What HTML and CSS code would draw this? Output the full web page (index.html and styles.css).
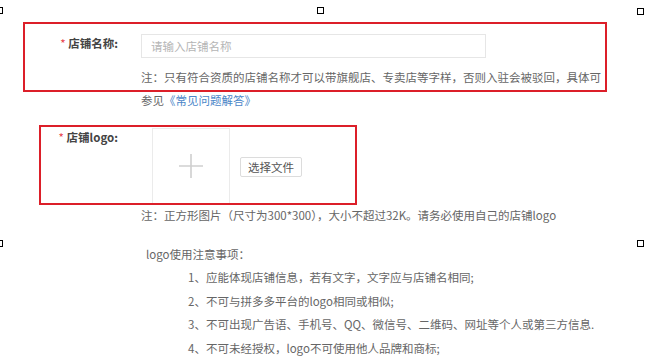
FILE: index.html
```html
<!DOCTYPE html>
<html lang="zh-CN">
<head>
    <meta charset="UTF-8">
    <meta name="viewport" content="width=device-width, initial-scale=1.0">
    <title>店铺信息</title>
    <link rel="stylesheet" href="styles.css">
</head>
<body>
    <div class="canvas">
        <form class="form">
            <div class="row row-name">
                <label class="label"><span class="req">*</span> 店铺名称:</label>
                <div class="field">
                    <input class="input" type="text" placeholder="请输入店铺名称">
                    <p class="tip tip-first">注：只有符合资质的店铺名称才可以带旗舰店、专卖店等字样，否则入驻会被驳回，具体可</p>
                    <p class="tip">参见<a class="link" href="#">《常见问题解答》</a></p>
                </div>
            </div>

            <div class="row row-logo">
                <label class="label"><span class="req">*</span> 店铺logo:</label>
                <div class="field">
                    <div class="upload">
                        <div class="upload-box">
                            <svg width="26" height="26" viewBox="0 0 26 26">
                                <path d="M13 1 V25 M1 13 H25" stroke="#cfcfcf" stroke-width="1.6" fill="none"/>
                            </svg>
                        </div>
                        <button class="btn" type="button">选择文件</button>
                    </div>
                    <p class="tip tip-logo">注：正方形图片（尺寸为300*300），大小不超过32K。请务必使用自己的店铺logo</p>
                </div>
            </div>

            <div class="rules">
                <p class="rules-title">logo使用注意事项：</p>
                <ol class="rules-list">
                    <li>1、应能体现店铺信息，若有文字，文字应与店铺名相同;</li>
                    <li>2、不可与拼多多平台的logo相同或相似;</li>
                    <li>3、不可出现广告语、手机号、QQ、微信号、二维码、网址等个人或第三方信息.</li>
                    <li>4、不可未经授权，logo不可使用他人品牌和商标;</li>
                </ol>
            </div>
        </form>

        <div class="mark mark-name"></div>
        <div class="mark mark-logo"></div>

        <span class="handle h-tl"></span>
        <span class="handle h-tm"></span>
        <span class="handle h-tr"></span>
        <span class="handle h-ml"></span>
        <span class="handle h-mr"></span>
    </div>
</body>
</html>
```

FILE: styles.css
```css
html, body {
    margin: 0;
    background: #fff;
}
body {
    font-family: "Noto Sans CJK SC", "Noto Sans", sans-serif;
    font-size: 11.5px;
    color: #666;
}
.canvas {
    position: relative;
    width: 645px;
    height: 362px;
    overflow: hidden;
}
.form {
    padding-top: 34px;
}
.row {
    display: flex;
}
.label {
    width: 118px;
    flex: none;
    text-align: right;
    line-height: 18px;
    font-weight: bold;
    color: #444;
    margin-right: 23px;
}
.req {
    color: #e8404a;
    font-weight: normal;
}
.field {
    display: flex;
    flex-direction: column;
}
.input {
    box-sizing: border-box;
    width: 345px;
    height: 24px;
    margin: 0;
    padding: 0 9px;
    border: 1px solid #e6e6e6;
    font-family: inherit;
    font-size: 11.5px;
    outline: none;
}
.input::placeholder {
    color: #b5b5b5;
}
.tip {
    margin: 0;
    line-height: 23px;
    white-space: nowrap;
}
.tip-first {
    margin-top: 8px;
}
.link {
    color: #4a86c8;
    text-decoration: none;
}
.row-logo {
    margin-top: 16px;
}
.row-logo .label {
    margin-right: 23px;
}
.upload {
    display: flex;
    align-items: center;
    margin-left: 11px;
}
.upload-box {
    box-sizing: border-box;
    width: 78px;
    height: 76px;
    border: 1px solid #ebebeb;
    display: flex;
    align-items: center;
    justify-content: center;
}
.btn {
    box-sizing: border-box;
    height: 20px;
    margin: 2px 0 0 10px;
    padding: 0 7px;
    border: 1px solid #dcdcdc;
    border-radius: 2px;
    background: #fff;
    font-family: inherit;
    font-size: 11.5px;
    color: #555;
}
.tip-logo {
    line-height: 22px;
}
.rules {
    margin-top: 17px;
}
.rules-title {
    margin: 0 0 0 146px;
    line-height: 23px;
}
.rules-list {
    list-style: none;
    margin: 0 0 0 188px;
    padding: 0;
}
.rules-list li {
    line-height: 23.5px;
    white-space: nowrap;
}
.mark {
    position: absolute;
    box-sizing: border-box;
    border: 2px solid #dc1f29;
}
.mark-name {
    left: 23px;
    top: 22px;
    width: 584px;
    height: 70px;
}
.mark-logo {
    left: 39px;
    top: 125px;
    width: 318px;
    height: 80px;
}
.handle {
    position: absolute;
    box-sizing: border-box;
    width: 7px;
    height: 7px;
    border: 1px solid #000;
    background: #fff;
}
.h-tl { left: -4px; top: 7px; }
.h-tm { left: 317px; top: 7px; }
.h-tr { left: 637px; top: 8px; }
.h-ml { left: -4px; top: 240px; }
.h-mr { left: 637px; top: 240px; }
```
